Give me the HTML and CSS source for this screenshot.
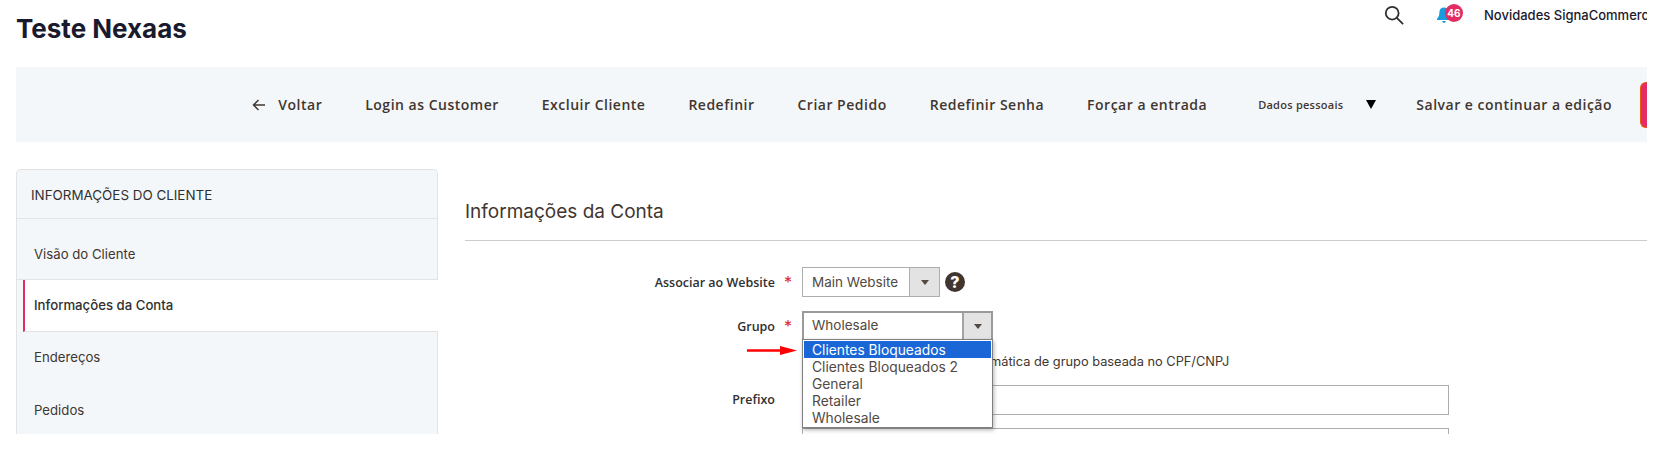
FILE: index.html
```html
<!DOCTYPE html>
<html lang="pt-BR">
<head>
  <meta charset="UTF-8" />
  <title>Teste Nexaas</title>
  <link rel="stylesheet" href="styles.css">
</head>
<body>
  <div class="pagina">
    <header class="topo">
      <h1>Teste Nexaas</h1>
      <div class="topo-acoes">
        <svg class="icone-busca" width="20" height="20" viewBox="0 0 20 20" fill="none" stroke="#303030" stroke-width="1.8">
          <circle cx="8.2" cy="8.2" r="6.4" />
          <path d="M12.8 12.8 L18.6 18.6" stroke-linecap="round" />
        </svg>
        <div class="sino">
          <svg width="16" height="18" viewBox="0 0 16 18" fill="#1a9bdc">
            <path d="M8 1.5c-2.8 0-4.6 2-4.6 4.8 0 3.400-1 5-2.400 6.500v1.200h14v-1.200c-1.400-1.500-2.400-3.100-2.400-6.500C12.600 3.500 10.800 1.500 8 1.500z" />
            <path d="M6.200 15h3.600c0 1.100-.8 1.900-1.800 1.900S6.200 16.100 6.200 15z" />
          </svg>
          <span class="contador">46</span>
        </div>
        <span class="novidades">Novidades SignaCommerce</span>
      </div>
    </header>

    <nav class="barra">
      <a class="barra-item voltar">
        <svg class="seta" width="13" height="12" viewBox="0 0 13 12" fill="none" stroke="#41362f" stroke-width="1.500">
          <path d="M13 6H1.500M6.500 1L1.500 6l5 5" />
        </svg>
        Voltar
      </a>
      <a class="barra-item">Login as Customer</a>
      <a class="barra-item">Excluir Cliente</a>
      <a class="barra-item">Redefinir</a>
      <a class="barra-item">Criar Pedido</a>
      <a class="barra-item">Redefinir Senha</a>
      <a class="barra-item">Forçar a entrada</a>
      <a class="barra-dados">Dados pessoais<span class="triangulo"></span></a>
      <a class="barra-item">Salvar e continuar a edição</a>
      <button class="salvar" type="button"></button>
    </nav>

    <div class="conteudo">
      <aside class="lateral">
        <div class="lateral-titulo">INFORMAÇÕES DO CLIENTE</div>
        <a class="lateral-item primeiro">Visão do Cliente</a>
        <a class="lateral-item ativo">Informações da Conta</a>
        <a class="lateral-item">Endereços</a>
        <a class="lateral-item">Pedidos</a>
      </aside>

      <main class="principal">
        <h2>Informações da Conta</h2>

        <div class="campos">
          <label class="rotulo">Associar ao Website</label>
          <span class="obrigatorio">*</span>
          <div class="controle">
            <div class="seletor site">
              <span class="seletor-valor">Main Website</span>
              <span class="seletor-botao"></span>
            </div>
            <span class="ajuda">?</span>
          </div>

          <label class="rotulo">Grupo</label>
          <span class="obrigatorio">*</span>
          <div class="controle">
            <div class="seletor grupo">
              <span class="seletor-valor">Wholesale</span>
              <span class="seletor-botao"></span>
              <svg class="seta-vermelha" width="50" height="10" viewBox="0 0 50 10">
                <path d="M0 4.500h34" stroke="#f00" stroke-width="2.500" />
                <path d="M33 0l17 4.500L33 9z" fill="#f00" />
              </svg>
              <ul class="opcoes">
                <li class="marcada">Clientes Bloqueados</li>
                <li>Clientes Bloqueados 2</li>
                <li>General</li>
                <li>Retailer</li>
                <li>Wholesale</li>
              </ul>
            </div>
          </div>

          <span></span>
          <span></span>
          <div class="nota">Desativar alteração automática de grupo baseada no CPF/CNPJ</div>

          <label class="rotulo">Prefixo</label>
          <span></span>
          <input class="entrada" type="text" />

          <span></span>
          <span></span>
          <input class="entrada" type="text" />
        </div>
      </main>
    </div>
  </div>
</body>
</html>
```

FILE: styles.css
```css
* {
  box-sizing: border-box;
}

body {
  margin: 0;
  background: white;
  font-family: Inter, "Noto Sans", sans-serif;
  color: #303030;
}

.pagina {
  width: 1647px;
  height: 434px;
  overflow: hidden;
}

/* topo */
.topo {
  display: flex;
  justify-content: space-between;
  height: 67px;
  padding-left: 16px;
}

h1 {
  margin: 14px 0 0;
  font-size: 26px;
  line-height: 30px;
  font-weight: 700;
  color: #1a1a2e;
}

.topo-acoes {
  display: flex;
  align-items: center;
  height: 30px;
  width: 264px;
  overflow: hidden;
  flex-shrink: 0;
}

.icone-busca {
  margin-left: 1px;
  flex-shrink: 0;
}

.sino {
  position: relative;
  width: 16px;
  height: 18px;
  margin-left: 32px;
  flex-shrink: 0;
}

.contador {
  position: absolute;
  left: 9px;
  top: -2px;
  width: 18px;
  height: 18px;
  border-radius: 50%;
  background: #e22c63;
  color: white;
  font-size: 10px;
  font-weight: 700;
  line-height: 18px;
  text-align: center;
}

.novidades {
  margin-left: 32px;
  font-size: 13px;
  font-weight: 500;
  white-space: nowrap;
  color: #1a1a2e;
}

/* barra de acoes */
.barra {
  display: flex;
  align-items: center;
  justify-content: flex-end;
  height: 75px;
  margin-left: 16px;
  background: #f4f7fa;
  overflow: hidden;
}

.barra-item {
  margin-right: 43px;
  font-family: "Open Sans", sans-serif;
  font-size: 14px;
  font-weight: 600;
  letter-spacing: 0.5px;
  white-space: nowrap;
  color: #41362f;
}

.voltar {
  display: flex;
  align-items: center;
}

.seta {
  margin-right: 13px;
}

.barra-dados {
  display: flex;
  align-items: center;
  margin-left: 8px;
  margin-right: 40px;
  font-family: "Open Sans", sans-serif;
  font-size: 11px;
  font-weight: 600;
  letter-spacing: 0.25px;
  white-space: nowrap;
  color: #41362f;
}

.triangulo {
  width: 0;
  height: 0;
  margin-left: 23px;
  border-left: 5px solid transparent;
  border-right: 5px solid transparent;
  border-top: 9px solid black;
}

.salvar {
  width: 7px;
  height: 46px;
  margin-left: -15px;
  padding: 0;
  border: 1px solid #e8590c;
  border-right: none;
  border-radius: 6px 0 0 6px;
  background: #e22c63;
}

/* lateral */
.conteudo {
  display: flex;
  padding: 27px 0 0 16px;
}

.lateral {
  width: 422px;
  flex-shrink: 0;
  border: 1px solid #e3e3e3;
  border-bottom: none;
  border-radius: 5px 5px 0 0;
  background: #f4f7fa;
  font-size: 13.200px;
}

.lateral-titulo {
  height: 49px;
  padding-left: 14px;
  border-bottom: 1px solid #e3e3e3;
  font-size: 13.400px;
  font-weight: 400;
  line-height: 50px;
}

.lateral-item {
  display: block;
  height: 53px;
  padding-left: 17px;
  line-height: 50px;
  color: #41362f;
}

.lateral-item.primeiro {
  height: 61px;
  padding-top: 10px;
  border-bottom: 1px solid #e3e3e3;
}

.lateral-item.ativo {
  height: 52px;
  margin-left: 6px;
  margin-right: -1px;
  padding-left: 9px;
  background: white;
  border-left: 2px solid #e22c63;
  border-bottom: 1px solid #e3e3e3;
  font-weight: 500;
  line-height: 51px;
  color: #303030;
}

/* formulario */
.principal {
  flex: 1;
  padding-left: 27px;
}

h2 {
  height: 72px;
  margin: 0;
  padding-top: 28px;
  font-size: 19px;
  line-height: 30px;
  font-weight: 400;
  color: #41362f;
  border-bottom: 1px solid #cccccc;
}

.campos {
  display: grid;
  grid-template-columns: 310px 27px 647px;
  margin-top: 26px;
  align-items: center;
  font-size: 13px;
}

.rotulo {
  font-family: "Open Sans", sans-serif;
  font-size: 12.500px;
  text-align: right;
  font-weight: 600;
  color: #303030;
}

.obrigatorio {
  padding-left: 9px;
  color: #e22626;
  font-size: 16px;
}

.controle {
  display: flex;
  align-items: center;
  gap: 5px;
  margin-bottom: 14px;
}

.rotulo,
.obrigatorio {
  margin-bottom: 14px;
}

.seletor {
  position: relative;
  display: flex;
  height: 30px;
  border: 1px solid #adadad;
  background: white;
}

.site {
  width: 138px;
}

.grupo {
  width: 191px;
  border: 2px solid #9a9a9a;
}

.seletor-valor {
  flex: 1;
  padding-left: 9px;
  font-size: 13.500px;
  line-height: 28px;
  color: #514943;
}

.grupo .seletor-valor {
  padding-left: 8px;
  line-height: 25px;
}

.seletor-botao {
  position: relative;
  width: 30px;
  background: #e3e3e3;
  border-left: 1px solid #adadad;
}

.grupo .seletor-botao {
  width: 29px;
  border-left: 2px solid #a3a3a3;
}

.seletor-botao::after {
  content: "";
  position: absolute;
  left: 11px;
  top: 12px;
  border-left: 4px solid transparent;
  border-right: 4px solid transparent;
  border-top: 5px solid #514943;
}

.grupo .seletor-botao::after {
  left: 10px;
  top: 11px;
}

.ajuda {
  width: 20px;
  height: 20px;
  border-radius: 50%;
  background: #41362f;
  color: white;
  font-size: 16px;
  font-weight: 800;
  line-height: 20px;
  text-align: center;
}

.seta-vermelha {
  position: absolute;
  left: -57px;
  top: 33px;
}

.opcoes {
  position: absolute;
  left: -2px;
  top: 26px;
  z-index: 2;
  width: 191px;
  margin: 0;
  padding: 1px;
  list-style: none;
  background: white;
  border: 1px solid #7f7f7f;
  box-shadow: 1px 2px 4px rgba(0,0,0,0.3);
  font-size: 13.800px;
  color: #514943;
}

.opcoes li {
  height: 17px;
  padding-left: 8px;
  line-height: 19px;
  white-space: nowrap;
}

.opcoes .marcada {
  background: #1a66d6;
  color: white;
}

.nota {
  height: 30px;
  padding-left: 41px;
  font-size: 12.800px;
  line-height: 14px;
  color: #41362f;
  white-space: nowrap;
}

.entrada {
  width: 647px;
  height: 30px;
  margin-bottom: 13px;
  border: 1px solid #adadad;
  background: white;
}
```
